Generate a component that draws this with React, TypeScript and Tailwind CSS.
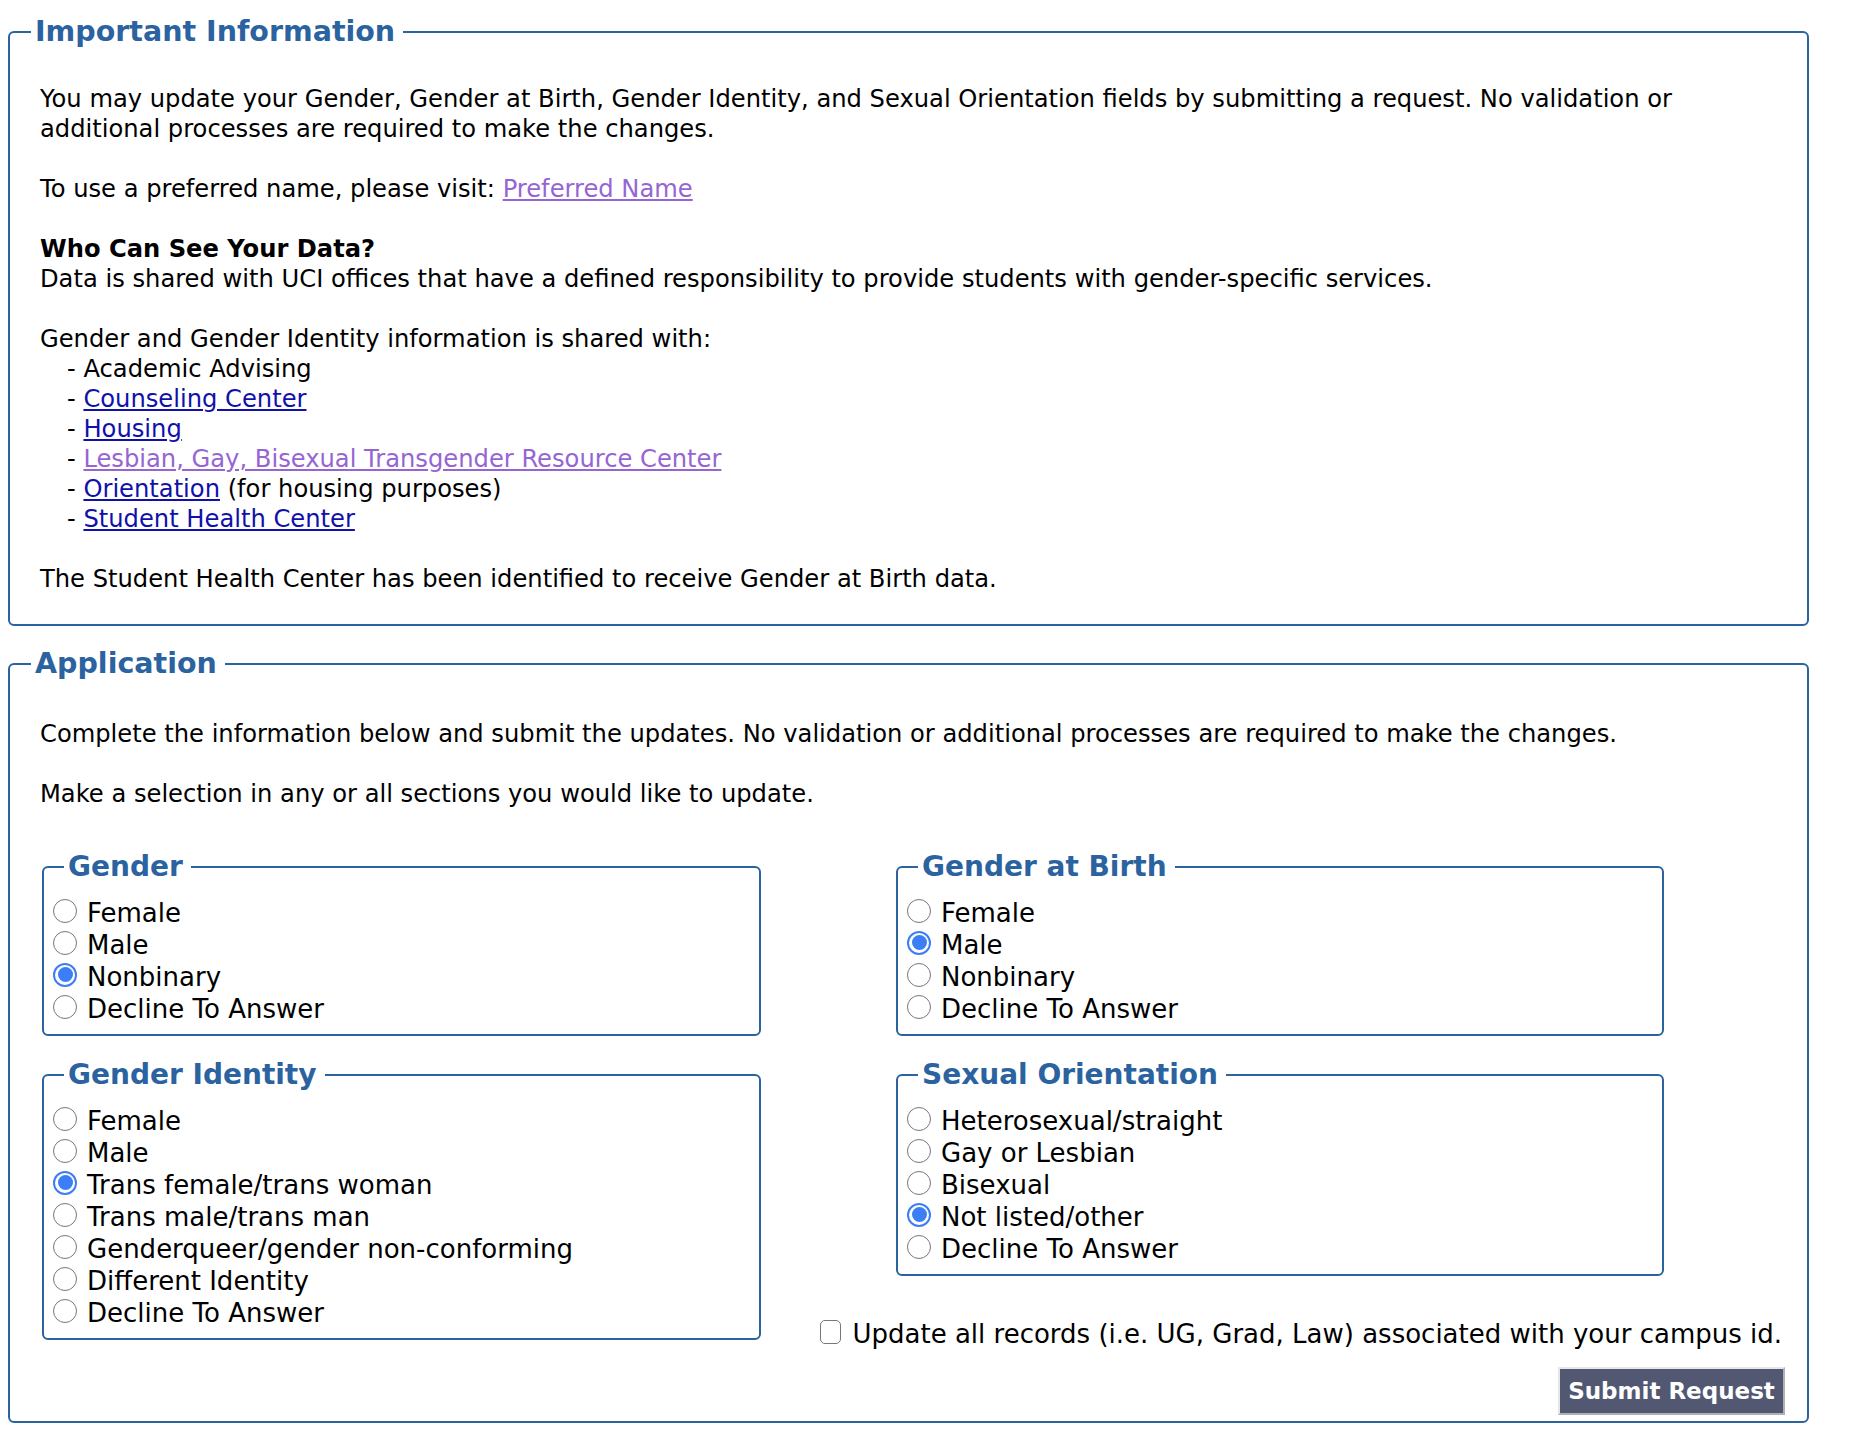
import React from "react";

const font = { fontFamily: '"DejaVu Sans", Verdana, sans-serif' };

function Radio({ checked }: { checked?: boolean }) {
  if (checked) {
    return (
      <span className="mb-[5px] flex h-[24px] w-[24px] shrink-0 items-center justify-center rounded-full border-2 border-[#3b7ef5] bg-white">
        <span className="h-[15px] w-[15px] rounded-full bg-[#3b7ef5]" />
      </span>
    );
  }
  return <span className="mb-[5px] block h-[24px] w-[24px] shrink-0 rounded-full border-[1.5px] border-[#777777] bg-white" />;
}

function Group({ title, options, selected }: { title: string; options: string[]; selected: number }) {
  return (
    <fieldset className="min-w-0 rounded-md border-2 border-[#2b62a0] pb-[9px] pl-[9px] pr-2">
      <legend className="ml-[11px] pl-1 pr-2 text-[28px] font-bold leading-[32px] text-[#2b62a0]">{title}</legend>
      <div className="pt-[14px]">
        {options.map((o, i) => (
          <label key={o} className="flex h-[32px] items-center gap-[10px] text-[26px] leading-[32px]">
            <Radio checked={i === selected} />
            <span>{o}</span>
          </label>
        ))}
      </div>
    </fieldset>
  );
}

export default function App() {
  const blue = "text-[#1010aa] underline";
  const visited = "text-[#9565d3] underline";

  return (
    <div className="min-h-screen bg-white pb-6 text-black" style={font}>
      {/* Important Information */}
      <fieldset className="ml-2 mt-4 w-[1801px] min-w-0 rounded-md border-2 border-[#2b62a0] pb-[30px] pl-[21px] pr-[22px]">
        <legend className="pl-1 pr-2 text-[28.5px] font-bold leading-[32px] text-[#2b62a0]">Important Information</legend>
        <div className="whitespace-nowrap pl-[9px] pt-[36px] text-[24.2px] leading-[30px]">
          <p>
            You may update your Gender, Gender at Birth, Gender Identity, and Sexual Orientation fields by submitting a request. No validation or
            <br />
            additional processes are required to make the changes.
          </p>
          <p className="mt-[30px]">
            To use a preferred name, please visit: <a className={visited}>Preferred Name</a>
          </p>
          <p className="mt-[30px] font-bold">Who Can See Your Data?</p>
          <p>Data is shared with UCI offices that have a defined responsibility to provide students with gender-specific services.</p>
          <p className="mt-[30px]">Gender and Gender Identity information is shared with:</p>
          <ul className="pl-[27px]">
            <li>- Academic Advising</li>
            <li>
              - <a className={blue}>Counseling Center</a>
            </li>
            <li>
              - <a className={blue}>Housing</a>
            </li>
            <li>
              - <a className={visited}>Lesbian, Gay, Bisexual Transgender Resource Center</a>
            </li>
            <li>
              - <a className={blue}>Orientation</a> (for housing purposes)
            </li>
            <li>
              - <a className={blue}>Student Health Center</a>
            </li>
          </ul>
          <p className="mt-[30px]">The Student Health Center has been identified to receive Gender at Birth data.</p>
        </div>
      </fieldset>

      {/* Application */}
      <fieldset className="ml-2 mt-[22px] w-[1801px] min-w-0 rounded-md border-2 border-[#2b62a0] pb-[6px] pl-[21px] pr-[22px]">
        <legend className="pl-1 pr-2 text-[28.5px] font-bold leading-[32px] text-[#2b62a0]">Application</legend>
        <div className="pl-[9px] pt-[39px] text-[24.2px] leading-[30px]">
          <p className="whitespace-nowrap">
            Complete the information below and submit the updates. No validation or additional processes are required to make the changes.
          </p>
          <p className="mt-[30px] whitespace-nowrap">Make a selection in any or all sections you would like to update.</p>

          <div className="ml-[2px] mt-[42px] grid grid-cols-[719px_minmax(0,1fr)] gap-x-[135px]">
            <div className="flex flex-col gap-[23px]">
              <Group title="Gender" options={["Female", "Male", "Nonbinary", "Decline To Answer"]} selected={2} />
              <Group
                title="Gender Identity"
                options={[
                  "Female",
                  "Male",
                  "Trans female/trans woman",
                  "Trans male/trans man",
                  "Genderqueer/gender non-conforming",
                  "Different Identity",
                  "Decline To Answer",
                ]}
                selected={2}
              />
            </div>
            <div className="flex min-w-0 flex-col">
              <div className="w-[768px]">
                <Group title="Gender at Birth" options={["Female", "Male", "Nonbinary", "Decline To Answer"]} selected={1} />
              </div>
              <div className="mt-[23px] w-[768px]">
                <Group
                  title="Sexual Orientation"
                  options={["Heterosexual/straight", "Gay or Lesbian", "Bisexual", "Not listed/other", "Decline To Answer"]}
                  selected={3}
                />
              </div>
              <label className="mr-[3px] mt-[43px] flex items-center justify-end gap-[11px] whitespace-nowrap text-[26px] leading-[30px]">
                <span className="mb-[5px] block h-[24px] w-[21px] shrink-0 rounded-[5px] border-[1.5px] border-[#777777] bg-white" />
                <span>Update all records (i.e. UG, Grad, Law) associated with your campus id.</span>
              </label>
            </div>
          </div>

          <div className="mt-[18px] flex justify-end">
            <button className="h-[48px] w-[227px] border-2 border-b-[#b0b0b0] border-l-[#e6e6e6] border-r-[#b0b0b0] border-t-[#e6e6e6] bg-[#535872] text-[23px] font-bold leading-none text-white">
              Submit Request
            </button>
          </div>
        </div>
      </fieldset>
    </div>
  );
}
